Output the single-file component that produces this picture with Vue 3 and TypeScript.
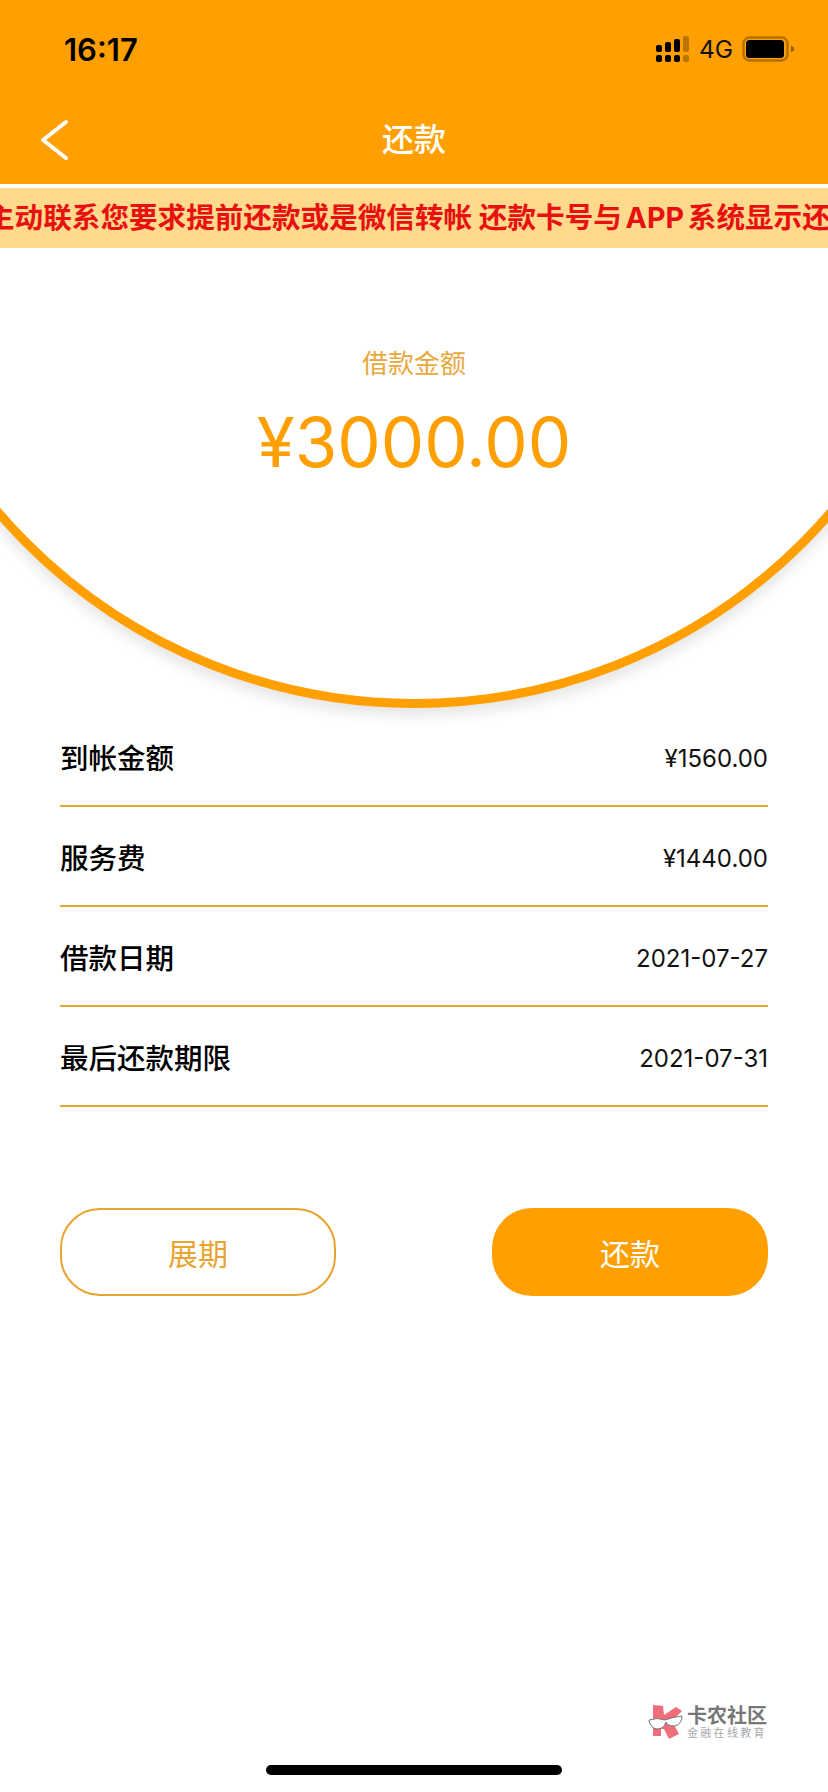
<template>
  <div class="page">
    <header class="top">
      <div class="status">
        <span class="time">16:17</span>
        <div class="status-right">
          <svg class="signal" width="33" height="26" viewBox="0 0 33 26">
            <rect x="0" y="9" width="6" height="7" rx="2" />
            <rect x="9" y="6" width="6" height="10" rx="2" />
            <rect x="18" y="3" width="6" height="13" rx="2" />
            <rect class="off" x="27" y="0" width="6" height="16" rx="2" />
            <rect x="0" y="19" width="6" height="7" rx="2" />
            <rect x="9" y="19" width="6" height="7" rx="2" />
            <rect x="18" y="19" width="6" height="7" rx="2" />
            <rect class="off" x="27" y="19" width="6" height="7" rx="2" />
          </svg>
          <span class="net">4G</span>
          <svg class="battery" width="52" height="26" viewBox="0 0 52 26">
            <rect x="1.5" y="1.5" width="44" height="23" rx="6" fill="none" stroke="#b36f00" stroke-width="2.4" />
            <rect x="4" y="4" width="38" height="18" rx="3.5" fill="#000" />
            <path d="M49 9.5 L52 11.5 V14.5 L49 16.5 Z" fill="#9a6000" />
          </svg>
        </div>
      </div>
      <nav class="nav">
        <svg class="back" width="32" height="42" viewBox="0 0 32 42">
          <path d="M28 3 L5 21 L28 39" fill="none" stroke="#fff" stroke-width="4" stroke-linecap="round" stroke-linejoin="round" />
        </svg>
        <h1 class="title">还款</h1>
      </nav>
    </header>

    <div class="notice">
      <p class="notice-text">主动联系您要求提前还款或是微信转帐 还款卡号<span class="tight">与 APP 系统</span>显示还款</p>
    </div>

    <section class="hero">
      <div class="circle"></div>
      <p class="hero-label">借款金额</p>
      <p class="hero-amount">¥3000.00</p>
    </section>

    <ul class="rows">
      <li v-for="row in rows" :key="row.label" class="row">
        <span class="row-label">{{ row.label }}</span>
        <span class="row-value">{{ row.value }}</span>
      </li>
    </ul>

    <div class="actions">
      <button class="btn ghost">展期</button>
      <button class="btn solid">还款</button>
    </div>

    <div class="watermark">
      <svg width="36" height="34" viewBox="0 0 36 34">
        <path d="M5 0 L15 1 L16 10 L28 2 L34 6 L24 16 L31 29 L21 34 L16 24 L13 24 L13 31 L5 31 Z" fill="#ee6f7b" />
        <path d="M1 15 Q9 12 17 15 Q25 12 34 11 Q34 19 27 21 Q19 21 18 17 Q16 24 9 24 Q2 23 1 15 Z" fill="#fff" stroke="#777" stroke-width="1" />
      </svg>
      <div class="mark-text">
        <span class="mark-name">卡农社区</span>
        <span class="mark-sub">金融在线教育</span>
      </div>
    </div>

    <div class="home-bar"></div>
  </div>
</template>

<script setup lang="ts">
const rows: { label: string; value: string }[] = [
  { label: '到帐金额', value: '¥1560.00' },
  { label: '服务费', value: '¥1440.00' },
  { label: '借款日期', value: '2021-07-27' },
  { label: '最后还款期限', value: '2021-07-31' },
]
</script>

<style>
html,
body {
  margin: 0;
  background: #fff;
}
</style>

<style scoped>
.page {
  width: 828px;
  height: 1792px;
  overflow: hidden;
  position: relative;
  display: flex;
  flex-direction: column;
  background: #fff;
  font-family: 'Inter', 'Liberation Sans', 'Noto Sans CJK SC', sans-serif;
}

.top {
  height: 184px;
  background: #ff9f02;
  display: flex;
  flex-direction: column;
}

.status {
  height: 88px;
  padding: 10px 34px 0 64px;
  box-sizing: border-box;
  display: flex;
  align-items: center;
  justify-content: space-between;
}

.time {
  font-size: 31px;
  font-weight: 600;
  color: #000;
}

.status-right {
  display: flex;
  align-items: center;
  gap: 10px;
}

.signal {
  fill: #000;
}

.signal .off {
  fill: #b97500;
}

.net {
  font-size: 24.5px;
  color: #111;
  width: 33px;
}

.nav {
  flex: 1;
  position: relative;
  display: flex;
  align-items: center;
  justify-content: center;
  padding-top: 2px;
}

.back {
  position: absolute;
  left: 38px;
  top: 31px;
}

.title {
  margin: 0;
  font-size: 32px;
  font-weight: 500;
  color: #fff;
}

.notice {
  margin-top: 4px;
  height: 60px;
  padding-bottom: 6px;
  box-sizing: border-box;
  background: #ffd98c;
  display: flex;
  align-items: center;
  overflow: hidden;
}

.notice-text {
  margin: 0 0 0 -14px;
  white-space: nowrap;
  font-size: 28.6px;
  font-weight: 700;
  color: #e81010;
}

.tight {
  word-spacing: -3px;
}

.hero {
  height: 459px;
  position: relative;
  display: flex;
  flex-direction: column;
  align-items: center;
  padding-top: 101px;
  box-sizing: border-box;
  clip-path: inset(0 0 -40px 0);
}

.circle {
  position: absolute;
  left: -139.5px;
  bottom: -1px;
  width: 1107px;
  height: 1107px;
  box-sizing: border-box;
  border: 9px solid #ff9f02;
  border-radius: 50%;
  box-shadow: 0 8px 14px rgba(0, 0, 0, 0.1);
  background: #fff;
}

.hero-label {
  position: relative;
  margin: 0;
  font-size: 26px;
  line-height: 30px;
  color: #e9a83c;
}

.hero-amount {
  position: relative;
  margin: 20px 0 0;
  font-size: 69px;
  line-height: 86px;
  color: #ff9f02;
}

.rows {
  list-style: none;
  margin: 0;
  padding: 0 60px;
}

.row {
  position: relative;
  height: 100px;
  box-sizing: border-box;
  border-bottom: 2px solid #e2aa2c;
  display: flex;
  align-items: center;
  justify-content: space-between;
}

.row-label {
  font-size: 28.5px;
  font-weight: 500;
  color: #000;
}

.row-value {
  font-size: 24px;
  color: #111;
  padding-top: 4px;
}

.actions {
  margin-top: 101px;
  padding: 0 60px;
  display: flex;
  justify-content: space-between;
}

.btn {
  width: 276px;
  height: 88px;
  border-radius: 40px;
  font-family: inherit;
  font-size: 30px;
  box-sizing: border-box;
}

.ghost {
  border: 2px solid #e9a32f;
  background: #fff;
  color: #e9a32f;
}

.solid {
  border: none;
  background: #ff9f02;
  color: #fff;
}

.watermark {
  position: absolute;
  left: 648px;
  top: 1705px;
  display: flex;
  gap: 3px;
}

.mark-text {
  display: flex;
  flex-direction: column;
}

.mark-name {
  font-size: 20px;
  line-height: 22px;
  font-weight: 700;
  color: #777;
}

.mark-sub {
  font-size: 11px;
  line-height: 13px;
  letter-spacing: 2.3px;
  color: #aaa;
}

.home-bar {
  position: absolute;
  left: 266px;
  top: 1765px;
  width: 296px;
  height: 10px;
  border-radius: 5px;
  background: #000;
}
</style>
